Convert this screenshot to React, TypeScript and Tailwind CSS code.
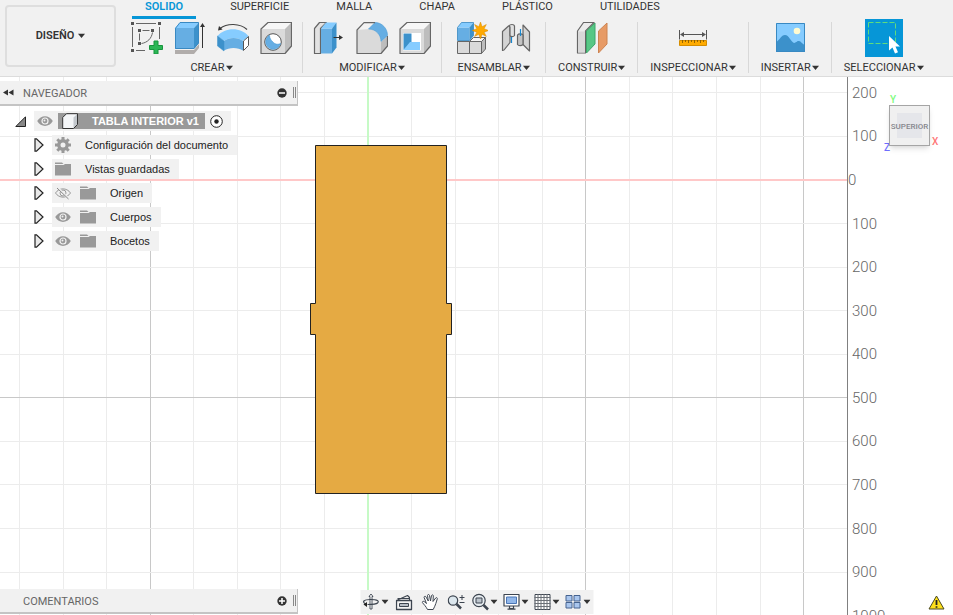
import type { ReactNode } from "react"

const GRID = 43.57
const ORIGIN_X = 368
const ORIGIN_Y = 103

const Caret = () => (
    <svg viewBox="0 0 7 7" className="h-[7px] w-[7px] shrink-0" aria-hidden="true">
        <path d="M0 .8h7L3.500 5z" fill="#333" />
    </svg>
)

const Draw = ({ children }: { children: ReactNode }) => (
    <svg viewBox="0 0 32 32" className="h-8 w-8 shrink-0" fill="none" strokeLinejoin="round" aria-hidden="true">
        {children}
    </svg>
)

const SketchIcon = () => (
    <Draw>
        <path d="M5 1.500h20M1.500 5v20M28.500 5v12M5 28.500h9M11.500 8.500h7M8.500 11.500v7" stroke="#666" />
        <path d="M21.500 10.500c-1 6-5 10-11 11" stroke="#666" />
        <path d="M0 0h3v3H0zM27 0h3v3h-3zM0 27h3v3H0zM7 7h3v3H7zM20 7h3v3h-3zM7 20h3v3H7z" fill="#555" />
        <path d="M23 19h4v4.500h4.500v4H27V32h-4v-4.500h-4.500v-4H23z" fill="#2bb655" stroke="#17953d" />
    </Draw>
)

const ExtrudeIcon = () => (
    <Draw>
        <path d="M1 28h19l5-6v4l-5 6H1z" fill="#b1adab" />
        <path d="M1 6h19v21H1z" fill="#66aee3" />
        <path d="M1 6l5-5.500h19L20 6z" fill="#86ccff" />
        <path d="M20 6l5-5.500V21l-5 6z" fill="#3c91cb" />
        <path d="M1.500 26.500V6.300L6 .5h18.500V21L20 26.500z" stroke="#3989c2" />
        <path d="M28.500 4v22" stroke="#333" />
        <path d="M26 5l2.500-4L31 5z" fill="#333" />
    </Draw>
)

const BendIcon = () => (
    <Draw>
        <path d="M3 6.500C10 1 23 1 30 7.500" stroke="#444" strokeWidth="1.200" />
        <path d="M1 8.500l1-4.500 3.500 3.500z" fill="#333" />
        <path d="M.5 14C8 5 24 5 31.500 14L26 19c-5-4-14-4-19 0z" fill="#86ccff" />
        <path d="M7 19c5-4 14-4 19 0v9.500c-5-3.500-14-3.500-19 0z" fill="#66aee3" />
        <path d="M.5 14L7 19v10L.5 24z" fill="#3c91cb" stroke="#3c91cb" strokeWidth=".5" />
        <path d="M26.500 19l5-4.500v9l-5 5z" fill="#fff" stroke="#555" />
    </Draw>
)

const BoxShape = () => (
    <>
        <path d="M1 7h24v24.500H1z" fill="#dadada" />
        <path d="M1 7L8 .5h23.500L25 7z" fill="#f7f7f7" />
        <path d="M25 7l6.500-6.500V24L25 31.500z" fill="#bdbdbd" />
        <path d="M1 31.500V7L8 .5h23.500V24L25 31.500z" stroke="#666" strokeWidth="1.200" />
    </>
)

const HoleIcon = () => (
    <Draw>
        <BoxShape />
        <circle cx="13" cy="20" r="8.300" fill="#fff" stroke="#555" />
        <path d="M9.500 13.300a7.500 7.500 0 1 0 11 8.200c-3 1.500-6 .5-7.500-1.500-2-1.500-3.500-4-3.500-6.700z" fill="#66aee3" stroke="#4c9ad3" strokeWidth=".6" />
    </Draw>
)

const PressPullIcon = () => (
    <Draw>
        <path d="M1.500 31.500V6.500l5-6h7l-6 6v25z" fill="#e2e2e2" stroke="#666" strokeWidth="1.200" />
        <path d="M8 6.500h11v25H8z" fill="#66aee3" />
        <path d="M8 6.500l5-6h10.500l-4.500 6z" fill="#86ccff" />
        <path d="M19 6.500l4.500-6v25l-4.500 6z" fill="#3c91cb" />
        <path d="M20.500 15.500H27" stroke="#333" />
        <path d="M26 13l4 2.500-4 2.500z" fill="#333" />
    </Draw>
)

const FilletIcon = () => (
    <Draw>
        <path d="M1 31.500V8L8 .7h11L13 7z" fill="#f3f3f3" />
        <path d="M1 31.500V8l12-1c7 0 12 6 12 13v11.500z" fill="#dadada" />
        <path d="M25 20l6.500-6v10L25 31.500z" fill="#bdbdbd" />
        <path d="M12.500 7L19 .5c7 0 12.500 6 12.500 13L25 19.500C25 13 20 7 12.500 7z" fill="#66aee3" stroke="#4c9ad3" strokeWidth=".6" />
        <path d="M19 .7H8L1 8v23.500h24l6.500-7.500V14" stroke="#666" strokeWidth="1.200" />
    </Draw>
)

const ShellIcon = () => (
    <Draw>
        <BoxShape />
        <path d="M4 11h18v17.500H4z" fill="#fff" />
        <path d="M4.500 11.500h8V20l-8 8z" fill="#3c91cb" />
        <path d="M11 20h10v8H4.500z" fill="#86ccff" />
    </Draw>
)

const AssembleIcon = () => (
    <Draw>
        <path d="M1.500 19.500h12v12h-12zM13.500 19.500h12v12h-12z" fill="#dadada" stroke="#666" />
        <path d="M13.500 19.500l4-4h12l-4 4z" fill="#f7f7f7" stroke="#666" />
        <path d="M25.500 19.500l4-4V27l-4 4.500z" fill="#bdbdbd" stroke="#666" />
        <path d="M1.500 5.500h12v13h-12z" fill="#66aee3" />
        <path d="M1.500 5.500l4-5h12l-4 5z" fill="#86ccff" />
        <path d="M13.500 5.500l4-5v13l-4 5z" fill="#3c91cb" />
        <path d="M1.500 18.500v-13l4-5h12v13l-4 5z" stroke="#3989c2" strokeWidth=".8" />
        <path d="M24.500 0l1.600 4.700L30.300 2.500l-2.200 4.200L32.500 8.500l-4.400 1.700 2.200 4.200-4.200-2.100-1.600 4.700-1.700-4.700-4.200 2.100 2.200-4.200-4.500-1.700 4.500-1.800-2.200-4.200 4.200 2.200z" fill="#ffa900" stroke="#d88a00" strokeWidth=".5" />
    </Draw>
)

const JointIcon = () => (
    <Draw>
        <path d="M3.500 9.500L9.500 4h1.500v16.500l-6 7.500-1.500.5z" fill="#d4d4d4" stroke="#666" strokeWidth="1.200" />
        <path d="M10 4c1-2 5-2 5.500 0v9.500c-1 1.500-4 1.500-4.500 0V5z" fill="#e1e1e1" stroke="#666" strokeWidth="1.200" />
        <path d="M12.500 15v6" stroke="#1888d0" strokeWidth="1.200" />
        <path d="M24 3l6.500 7v19L24 22.500z" fill="#d4d4d4" stroke="#666" strokeWidth="1.200" />
        <path d="M18.500 13c1-1.500 4.500-1.500 5.500 0v9.500c-1.500 1.500-4.500 1.500-5.500 0z" fill="#c3c3c3" stroke="#666" strokeWidth="1.200" />
        <path d="M21.500 7v7" stroke="#1888d0" strokeWidth="1.200" />
    </Draw>
)

const PlaneIcon = () => (
    <Draw>
        <path d="M1.500 31V9l6-8.500H18L9.500 9v22z" fill="#ececec" stroke="#666" strokeWidth="1.200" />
        <path d="M2 9.500h7V30.500H2z" fill="#d8d8d8" />
        <path d="M10.500 9L19 1v21l-8.500 9z" fill="#57c785" stroke="#3fa76b" />
        <path d="M22.500 9L31 1v21l-8.500 9z" fill="#e79b66" stroke="#cd8351" />
    </Draw>
)

const MeasureIcon = () => (
    <Draw>
        <path d="M2.500 8v9.500M29.500 8v9.500M4 12.500h24" stroke="#555" />
        <path d="M3 12.500l4-2.500v5zM29 12.500L25 10v5z" fill="#555" />
        <path d="M2.500 18.500h27v5h-27z" fill="#ffab00" stroke="#d58d00" />
        <path d="M5.500 18v3M8.500 18v2M11.500 18v3M14.500 18v2M17.500 18v3M20.500 18v2M23.500 18v3M26.500 18v2" stroke="#7a5200" strokeWidth=".8" />
    </Draw>
)

const PictureIcon = () => (
    <Draw>
        <path d="M2 1h29v29H2z" fill="#86ccff" />
        <path d="M2 20c4-2 5-7 9-7s6 7 9 8c3-1 3-2 5-2s3 3 6 4v7H2z" fill="#3c91cb" />
        <circle cx="23" cy="9" r="3.300" fill="#fffbd1" />
        <path d="M2.500 1.500h28v28h-28z" stroke="#3989c2" />
    </Draw>
)

const SelectIcon = () => (
    <svg viewBox="0 0 38 38" className="h-[38px] w-[38px] bg-[#0696d7]" aria-hidden="true">
        <path d="M3.500 3.500h27v21h-27z" fill="none" stroke="#5fdc7d" strokeDasharray="5 2" />
        <path d="M24 17v14.500l3.500-3 2.500 6 3-1.300-2.500-5.700H35z" fill="#fff" />
    </svg>
)

const tabs = ["SOLIDO", "SUPERFICIE", "MALLA", "CHAPA", "PLÁSTICO", "UTILIDADES"]

const groups = [
    {
        label: "CREAR",
        padding: "px-[10px]",
        tools: [
            { name: "Crear boceto", icon: <SketchIcon /> },
            { name: "Extruir", icon: <ExtrudeIcon /> },
            { name: "Revolución", icon: <BendIcon /> },
            { name: "Agujero", icon: <HoleIcon /> },
        ],
    },
    {
        label: "MODIFICAR",
        padding: "px-[10px]",
        tools: [
            { name: "Pulsar/tirar", icon: <PressPullIcon /> },
            { name: "Empalme", icon: <FilletIcon /> },
            { name: "Vaciado", icon: <ShellIcon /> },
        ],
    },
    {
        label: "ENSAMBLAR",
        padding: "px-[14px]",
        tools: [
            { name: "Nuevo componente", icon: <AssembleIcon /> },
            { name: "Unión", icon: <JointIcon /> },
        ],
    },
    { label: "CONSTRUIR", padding: "px-3", tools: [{ name: "Plano", icon: <PlaneIcon /> }] },
    { label: "INSPECCIONAR", padding: "px-3", tools: [{ name: "Medir", icon: <MeasureIcon /> }] },
    { label: "INSERTAR", padding: "px-3", tools: [{ name: "Imagen", icon: <PictureIcon /> }] },
    { label: "SELECCIONAR", padding: "px-3", tools: [{ name: "Seleccionar objeto", icon: <SelectIcon /> }] },
]

const Ribbon = () => (
    <header className="flex h-[77px] shrink-0 border-b border-[#dcdcdc] bg-[#f1f1f1] font-[Roboto,sans-serif] text-[11px] text-[#333]">
        <button className="mt-[5px] ml-[5px] flex h-[62px] w-[111px] shrink-0 items-center justify-center gap-1 rounded-[4px] border-2 border-[#dedede] font-semibold">
            DISEÑO
            <Caret />
        </button>
        <div className="ml-[5px] flex flex-col">
            <nav className="flex h-[19px] gap-[21px] pl-[11px]">
                {tabs.map((tab, i) => (
                    <button
                        key={tab}
                        className={
                            i === 0
                                ? "border-b-[3px] border-[#0696d7] px-[13px] pb-0.5 leading-3 font-semibold text-[#0696d7]"
                                : "border-b-[3px] border-transparent px-[13px] pb-0.5 leading-3"
                        }>
                        {tab}
                    </button>
                ))}
            </nav>
            <div className="flex">
                {groups.map((group, i) => (
                    <section key={group.label} className="flex items-center">
                        <div className={`flex flex-col items-center ${group.padding}`}>
                            <div className="flex h-[38px] items-center gap-[11px]">
                                {group.tools.map((tool) => (
                                    <button key={tool.name} aria-label={tool.name}>{tool.icon}</button>
                                ))}
                            </div>
                            <button className="mt-[3px] flex items-center gap-px leading-4">
                                {group.label}
                                <Caret />
                            </button>
                        </div>
                        {i < groups.length - 1 && <div className="h-[51px] w-px bg-[#d8d8d8]" />}
                    </section>
                ))}
            </div>
        </div>
    </header>
)

const columns = Array.from({ length: 50 }, (_, i) => i - 8)
const rows = Array.from({ length: 30 }, (_, i) => i - 2)
const marks = Array.from({ length: 13 }, (_, i) => i - 2)

const Viewport = () => (
    <div className="absolute inset-0 flex">
        <svg className="h-full min-w-0 flex-1" aria-hidden="true">
            {columns.map((n) => (
                <path key={n} d={`M${Math.floor(ORIGIN_X + n * GRID) + 0.5} 0v2000`} stroke={n % 5 === 0 ? "#c8c8c8" : "#ececec"} />
            ))}
            {rows.map((n) => (
                <path key={n} d={`M0 ${Math.floor(ORIGIN_Y + n * GRID) + 0.5}h3000`} stroke={n % 5 === 0 ? "#c8c8c8" : "#ececec"} />
            ))}
            <path d="M0 103h3000" stroke="#ffc8c8" strokeWidth="2" />
            <path d="M368 0v2000" stroke="#c6fac6" strokeWidth="2" />
            <path
                d="M315.500 68.500h131v158h5v31h-5v159h-131v-159h-5v-31h5z"
                fill="#e5aa43"
                stroke="#222"
            />
        </svg>
        <svg className="h-full w-[106px] border-l border-[#808080]" fontFamily="Roboto, sans-serif" fontSize="15" fontWeight="300" fill="#666">
            {marks.map((n) => (
                <text key={n} x={n === 0 ? 0 : 4} y={Math.round(ORIGIN_Y + n * GRID) + 5}>{Math.abs(n * 100)}</text>
            ))}
        </svg>
    </div>
)

const Eye = ({ hidden = false }: { hidden?: boolean }) => (
    <svg viewBox="0 0 16 16" className="h-4 w-4 shrink-0" fill="none" aria-hidden="true">
        {hidden ? (
            <>
                <path d="M.5 8C4 2.500 12 2.500 15.500 8 12 13.500 4 13.500.5 8z" stroke="#999" />
                <circle cx="8" cy="8" r="3" stroke="#999" />
                <path d="M2.500 2.500l11 11" stroke="#f1f1f1" strokeWidth="2" />
                <path d="M2 3l11.500 11" stroke="#888" />
            </>
        ) : (
            <>
                <path d="M.2 8C4 1.500 12 1.500 15.800 8 12 14.500 4 14.500 .2 8z" fill="#999" />
                <circle cx="8" cy="8" r="3" fill="#999" stroke="#f1f1f1" strokeWidth="1.200" />
                <circle cx="7.500" cy="7.500" r="1" fill="#f1f1f1" />
            </>
        )}
    </svg>
)

const Folder = () => (
    <svg viewBox="0 0 16 16" className="h-4 w-4 shrink-0" aria-hidden="true">
        <path d="M0 1.500h7l1.500 1.500H0z" fill="#999" />
        <path d="M0 4h8.500l1.500-1h6v11.500H0z" fill="#999" />
    </svg>
)

const Gear = () => (
    <svg viewBox="0 0 16 16" className="h-4 w-4 shrink-0" fill="none" stroke="#999" aria-hidden="true">
        <circle cx="8" cy="8" r="4.200" strokeWidth="3.400" />
        <path d="M8 0v3M8 13v3M0 8h3M13 8h3M2.300 2.300l2.200 2.200M11.500 11.500l2.200 2.200M13.700 2.300l-2.200 2.200M4.500 11.500l-2.200 2.200" strokeWidth="3" />
    </svg>
)

const Expander = () => (
    <button aria-label="Expandir" className="mr-2 w-[10px]">
        <svg viewBox="0 0 10 14" className="h-[14px] w-[10px]" aria-hidden="true">
            <path d="M1 .8h1.500L9 7l-6.500 6.200H1z" fill="#e8e8e8" stroke="#222" strokeWidth="1.200" />
        </svg>
    </button>
)

const items = [
    { label: "Configuración del documento", icons: <Gear /> },
    { label: "Vistas guardadas", icons: <Folder /> },
    { label: "Origen", icons: <><Eye hidden /><Folder /></> },
    { label: "Cuerpos", icons: <><Eye /><Folder /></> },
    { label: "Bocetos", icons: <><Eye /><Folder /></> },
]

const PanelBar = ({ title, open }: { title: string; open: boolean }) => (
    <div className="flex h-[25px] w-[298px] items-center border-r border-b-2 border-[#c4c4c4] bg-[#f1f1f1] font-[Roboto,sans-serif] text-[11px] text-[#666]">
        <div className="w-[23px] pl-[3px]">
            {open && (
                <svg viewBox="0 0 11 7" className="h-[7px] w-[11px]" aria-hidden="true">
                    <path d="M5 .5v6L0 3.500zM10.500 .5v6l-5-3z" fill="#333" />
                </svg>
            )}
        </div>
        <h2 className="flex-1 pt-[3px]">{title}</h2>
        <button aria-label={open ? "Contraer" : "Ampliar"}>
            <svg viewBox="0 0 10 10" className="h-[10px] w-[10px]" aria-hidden="true">
                <circle cx="5" cy="5" r="4.700" fill="#333" />
                <path d={open ? "M2 5h6" : "M2 5h6M5 2v6"} stroke="#fff" strokeWidth="1.500" />
            </svg>
        </button>
        <div className="mr-px ml-[6px] h-[11px] w-[3px] border-x border-[#888]" />
    </div>
)

const Browser = () => (
    <aside>
        <PanelBar title="NAVEGADOR" open />
        <ul className="mt-[5px] flex flex-col gap-1 font-['Liberation_Sans',sans-serif] text-[11px] text-[#222]">
            <li className="flex h-5 items-center pl-[15px]">
                <button aria-label="Contraer" className="mr-2">
                    <svg viewBox="0 0 11 11" className="h-[11px] w-[11px]" aria-hidden="true">
                        <path d="M10.500 .8v9.700H.8z" fill="#888" stroke="#222" />
                    </svg>
                </button>
                <div className="flex h-5 items-center gap-[5px] bg-[#f1f1f1] pr-2 pl-[3px]">
                    <Eye />
                    <div className="flex h-4 items-center gap-[14px] bg-[#999] pr-[6px] pl-1 font-bold text-white">
                        <svg viewBox="0 0 16 16" className="h-4 w-4" strokeLinejoin="round" aria-hidden="true">
                            <path d="M.7 4.500L4.500.7h11v10.800l-4 4H.7z" fill="#f4f6f8" />
                            <path d="M11.500 4.500l4-3.800v10.800l-4 4z" fill="#c3c8cd" />
                            <path d="M.7 4.500L4.500.7h11v10.800l-4 4H.7z" fill="none" stroke="#333" />
                        </svg>
                        TABLA INTERIOR v1
                    </div>
                    <svg viewBox="0 0 13 13" className="h-[13px] w-[13px]" aria-hidden="true">
                        <circle cx="6.500" cy="6.500" r="5.800" fill="#fff" stroke="#222" />
                        <circle cx="6.500" cy="6.500" r="2.200" fill="#222" />
                    </svg>
                </div>
            </li>
            {items.map((item) => (
                <li key={item.label} className="flex h-5 items-center pl-[34px]">
                    <Expander />
                    <div className="flex h-5 items-center bg-[#f1f1f1] pr-[9px] pl-[3px]">
                        <div className="flex gap-[9px]">{item.icons}</div>
                        <span className="ml-[14px]">{item.label}</span>
                    </div>
                </li>
            ))}
        </ul>
    </aside>
)

const ViewCube = () => (
    <div className="absolute top-[28px] right-[23px] h-[41px] w-[41px] font-[Roboto,sans-serif] text-[10px] leading-none font-medium">
        <span className="absolute -top-[10px] left-px text-[#7dfb7d]">Y</span>
        <span className="absolute top-[32px] left-[43px] text-[#ff7676]">X</span>
        <span className="absolute top-[38px] -left-[5px] text-[#6f6fff]">Z</span>
        <button className="relative flex h-full w-full items-center justify-center border border-[#a5a5a5] bg-[#f0f0f0] text-[8px] text-[#85878d] shadow-md">
            <span className="absolute top-[7px] left-[7px] h-[25px] w-[25px] bg-[#e5e6ea]" />
            <span className="relative pt-0.5">SUPERIOR</span>
        </button>
    </div>
)

const Small = ({ children }: { children: ReactNode }) => (
    <svg viewBox="0 0 18 18" className="h-[18px] w-[18px]" fill="none" stroke="#3d4550" strokeLinejoin="round" aria-hidden="true">
        {children}
    </svg>
)

const navTools = [
    {
        name: "Órbita", menu: true,
        icon: <Small>
            <path d="M6.500 3.500L8.500 1l2 2.500h-1V16h-2V3.500z" fill="#fff" strokeWidth=".9" />
            <path d="M3.500 11C-1 9 1 6.500 8 6.500s9 1.500 7 3.500c-1 1-3 1.500-10 1.500" strokeWidth="1.200" />
            <path d="M4.500 9v5L1 11.500z" fill="#222" stroke="none" />
        </Small>,
    },
    {
        name: "Mirar a", menu: false,
        icon: <Small>
            <path d="M1 7.500h15v9H1z" fill="#f4f4f4" strokeWidth="1.300" />
            <path d="M4 10.500h9v3H4z" fill="#b8bec6" />
            <path d="M2 7l10-4.500 2 2V7" strokeWidth="1.100" />
            <path d="M2 5.500h12" />
        </Small>,
    },
    {
        name: "Encuadre", menu: false,
        icon: <Small>
            <path d="M6 16.500C4.500 13.500 2.500 11.500 .8 9.500c0-1.500 1.500-1.500 2.500-.5l1.700 1.500-2.400-6c0-1.500 1.500-1.700 2-.4L6.800 8 6 2.500c.2-1.300 1.800-1.300 2 0L9 8l1-5.500c.6-1.100 1.900-.7 1.800.4L11.500 8.500l2.700-3.500c.8-.9 1.900-.2 1.600.8-1 3-1.600 6-4.100 10.700z" fill="#fff" />
        </Small>,
    },
    {
        name: "Zoom", menu: false,
        icon: <Small>
            <circle cx="5.500" cy="7.500" r="4.700" fill="#dce7ee" strokeWidth="1.200" />
            <path d="M9 11l4.500 4.500" strokeWidth="2.500" />
            <path d="M12 4.500h5M14.500 2v5M12 9.500h5" />
        </Small>,
    },
    {
        name: "Ajustar", menu: true,
        icon: <Small>
            <circle cx="7.500" cy="7.500" r="6.200" fill="#e8eef2" strokeWidth="1.200" />
            <path d="M4.500 5h6v5h-6z" fill="#bcc4cc" />
            <path d="M12 12l4.500 4.500" strokeWidth="2.500" />
        </Small>,
    },
    {
        name: "Visualización", menu: true,
        icon: <Small>
            <path d="M1.500 1.500h15v11.500h-15z" fill="#fff" strokeWidth="1.200" />
            <path d="M4 4h10v6.500H4z" fill="#91b7ea" stroke="#4b76b5" />
            <path d="M7 13v2.500h4V13M5 16.200h8" strokeWidth="1.200" />
        </Small>,
    },
    {
        name: "Rejilla", menu: true,
        icon: <Small>
            <path d="M1.500 1.500h15v15h-15z" fill="#fff" />
            <path d="M4.500 1v16M7.500 1v16M10.500 1v16M13.500 1v16M1 4.500h16M1 7.500h16M1 10.500h16M1 13.500h16" stroke="#6b7077" />
        </Small>,
    },
    {
        name: "Ventanas", menu: true,
        icon: <Small>
            <path d="M1.500 2.500h6v5.500h-6zM9.500 2.500h6v5.500h-6zM1.500 9.500h6V15h-6zM9.500 9.500h6V15h-6z" fill="#a9c6ee" stroke="#46638f" />
        </Small>,
    },
]

const NavBar = () => (
    <div className="absolute bottom-px left-1/2 flex h-6 -translate-x-1/2 bg-[#f1f1f1]">
        {navTools.map((tool) => (
            <button
                key={tool.name}
                aria-label={tool.name}
                className={tool.menu ? "flex items-center gap-px pr-[3px] pl-[2px]" : "flex items-center px-1"}>
                {tool.icon}
                {tool.menu && <Caret />}
            </button>
        ))}
    </div>
)

const App = () => {
    return (
        <div className="flex h-screen flex-col overflow-hidden bg-white">
            <Ribbon />
            <main className="relative min-h-0 flex-1 overflow-hidden">
                <Viewport />
                <div className="relative flex h-full flex-col items-start justify-between pt-1 pb-px">
                    <Browser />
                    <PanelBar title="COMENTARIOS" open={false} />
                </div>
                <ViewCube />
                <NavBar />
                <button aria-label="Advertencia" className="absolute right-2 bottom-[5px]">
                    <svg viewBox="0 0 17 15" className="h-[15px] w-[17px]" strokeLinejoin="round" aria-hidden="true">
                        <path d="M8.500 1L16 14H1z" fill="#ffe01b" stroke="#4a4a20" />
                        <path d="M8.500 5v5M8.500 11.300v1.500" stroke="#222" strokeWidth="1.800" />
                    </svg>
                </button>
            </main>
        </div>
    )
}

export default App
